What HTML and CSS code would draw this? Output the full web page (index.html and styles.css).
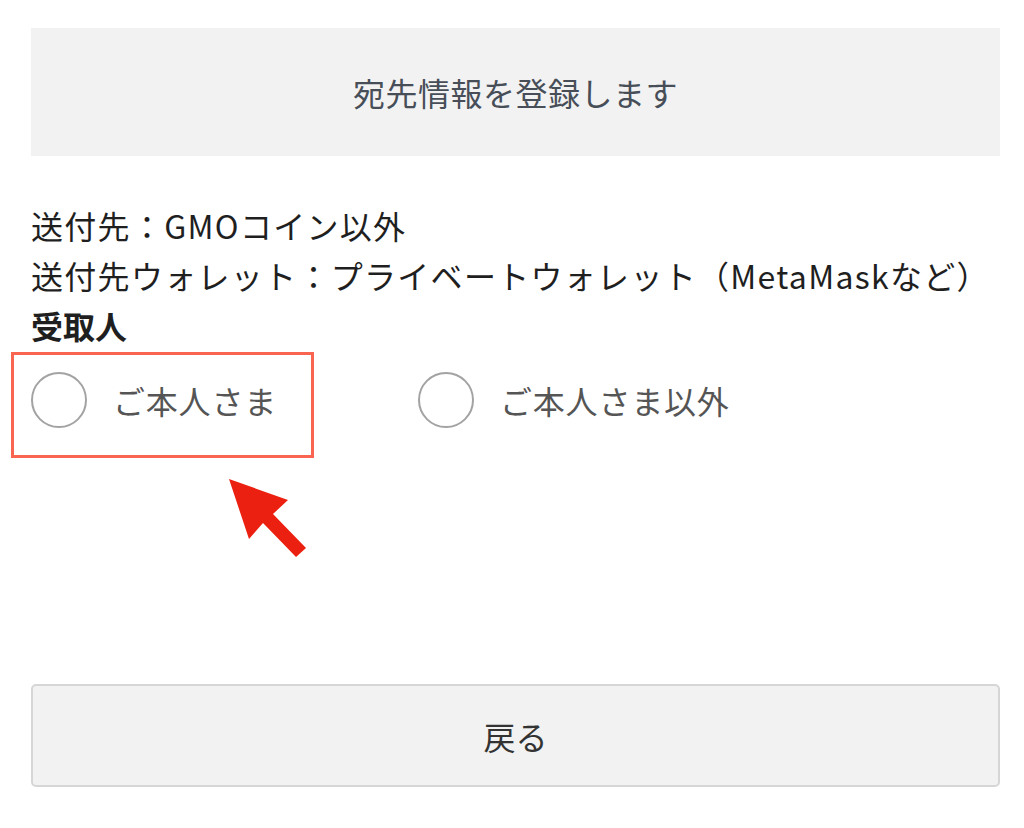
FILE: index.html
```html
<!DOCTYPE html>
<html lang="ja">
<head>
<meta charset="utf-8">
<title>宛先情報</title>
<link rel="stylesheet" href="styles.css">
</head>
<body>
<div class="page">
  <div class="header">宛先情報を登録します</div>
  <div class="info">
    <p class="line">送付先：GMOコイン以外</p>
    <p class="line">送付先ウォレット：プライベートウォレット（MetaMaskなど）</p>
    <p class="line strong">受取人</p>
  </div>
  <div class="radios">
    <label class="option highlighted">
      <span class="circle"></span>
      <span class="label">ご本人さま</span>
      <span class="annot-box"></span>
      <svg class="annot-arrow" width="90" height="90" viewBox="0 0 90 90">
        <polygon points="4,4 63,25 48,39 81,73 71,82 38,48 24,64" fill="#ec2010"/>
      </svg>
    </label>
    <label class="option">
      <span class="circle"></span>
      <span class="label">ご本人さま以外</span>
    </label>
  </div>
  <button class="back">戻る</button>
</div>
</body>
</html>
```

FILE: styles.css
```css
html, body {
  margin: 0;
  padding: 0;
  background: #ffffff;
}
body {
  font-family: "Noto Sans CJK JP", "Noto Sans", "Liberation Sans", sans-serif;
  color: #1f1f1f;
}
.page {
  padding: 28px 24px 0 31px;
}
.header {
  background: #f2f2f2;
  height: 128px;
  display: flex;
  align-items: center;
  justify-content: center;
  font-size: 32px;
  color: #474e58;
  letter-spacing: 0.5px;
}
.info {
  margin-top: 44px;
}
.line {
  margin: 0;
  font-size: 32px;
  line-height: 50px;
  height: 50px;
  white-space: nowrap;
  letter-spacing: 1.3px;
}
.strong {
  font-weight: 700;
  letter-spacing: 0;
}
.radios {
  display: grid;
  grid-template-columns: 387px auto;
  height: 100px;
  align-items: center;
}
.option {
  position: relative;
  display: flex;
  align-items: center;
  gap: 26px;
}
.circle {
  width: 52px;
  height: 52px;
  border: 2px solid #a3a3a3;
  border-radius: 50%;
  flex: none;
}
.label {
  font-size: 32px;
  color: #555555;
  letter-spacing: 0.8px;
}
.annot-box {
  position: absolute;
  left: -20px;
  top: calc(50% - 48px);
  width: 297px;
  height: 100px;
  border: 3px solid #fa6552;
  pointer-events: none;
}
.annot-arrow {
  position: absolute;
  left: 194px;
  top: calc(50% + 75px);
}
.back {
  display: flex;
  align-items: center;
  justify-content: center;
  margin-top: 234px;
  width: 100%;
  height: 103px;
  background: #f2f2f2;
  border: 2px solid #d6d6d6;
  border-radius: 5px;
  font-family: inherit;
  font-size: 32px;
  color: #333333;
  padding: 0;
}
```
